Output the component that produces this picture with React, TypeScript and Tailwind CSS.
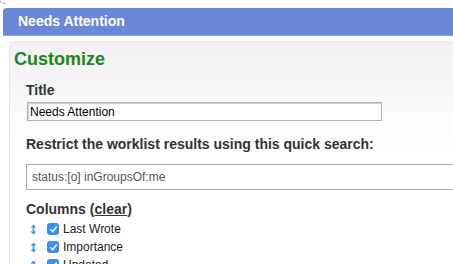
const ArrowUpDown = () => (
    <svg width="7" height="11" viewBox="0 0 7 11" className="block">
        <path d="M3.5 0.5 L6.5 3.5 L0.5 3.5 Z" fill="#4f9be0" />
        <rect x="2.6" y="3" width="1.8" height="5" fill="#4f9be0" />
        <path d="M3.5 10.5 L6.5 7.5 L0.5 7.5 Z" fill="#4f9be0" />
    </svg>
);

const Check = () => (
    <span className="flex h-[12px] w-[12px] items-center justify-center rounded-[3px] bg-[#3d8ef2]">
        <svg width="9" height="9" viewBox="0 0 9 9">
            <path d="M1.8 4.8 L3.7 6.7 L7.3 2" fill="none" stroke="white" strokeWidth="1.5" strokeLinecap="round" strokeLinejoin="round" />
        </svg>
    </span>
);

const ColumnRow = ({ label }: { label: string }) => (
    <div className="flex h-[18px] items-center">
        <span className="ml-[4px] w-[7px]">
            <ArrowUpDown />
        </span>
        <span className="ml-[10px]">
            <Check />
        </span>
        <span className="ml-[4px] text-[12px] text-[#222]">{label}</span>
    </div>
);

const App = () => {
    return (
        <div className="h-[264px] w-full overflow-hidden bg-white font-['Liberation_Sans',Arial,sans-serif]">
            {/* corner of the box above */}
            <div className="h-[4px] w-[6px] rounded-bl-[4px] border-b border-l border-[#c4c4c4]" />
            <div className="h-[4px]" />

            {/* Header */}
            <div className="ml-[3px] h-[28px] rounded-tl-[4px] border-b border-[#8ea5e8] bg-[#6a88da] pl-[15px] text-[14px] leading-[27px] font-bold text-white">
                Needs Attention
            </div>

            {/* Panel */}
            <div className="mt-[5px] ml-[9px] h-[240px] rounded-tl-[5px] border-t border-l border-[#e4e4e4] bg-[linear-gradient(to_bottom,#f1f1f1,#f7f7f7_50px,#fff_110px)] pt-[6px] pl-[4px]">
                <h2 className="text-[18px] leading-[22px] font-bold text-[#1d861d]">Customize</h2>

                <div className="ml-[12px] text-[#333]">
                    <h3 className="mt-[11px] text-[14px] leading-[18px] font-bold">Title</h3>
                    <input
                        readOnly
                        value="Needs Attention"
                        className="mt-[3px] ml-[1px] block h-[19px] w-[355px] border border-[#b2b2b2] bg-white pl-[2px] text-[12px] text-black shadow-[inset_1px_1px_0_#d0d0d0] outline-none"
                    />

                    <h3 className="mt-[14px] text-[14px] leading-[18px] font-bold">
                        Restrict the worklist results using this quick search:
                    </h3>
                    <input
                        readOnly
                        value="status:[o] inGroupsOf:me"
                        className="mt-[11px] block h-[26px] w-[440px] border-t border-b border-l border-[#a9a9a9] bg-white pl-[5px] text-[12px] text-[#555] outline-none"
                    />

                    <h3 className="mt-[10px] text-[14px] leading-[18px] font-bold">
                        Columns (<span className="underline">clear</span>)
                    </h3>
                    <div className="mt-[2px]">
                        <ColumnRow label="Last Wrote" />
                        <ColumnRow label="Importance" />
                        <ColumnRow label="Updated" />
                    </div>
                </div>
            </div>
        </div>
    );
};

export default App;
